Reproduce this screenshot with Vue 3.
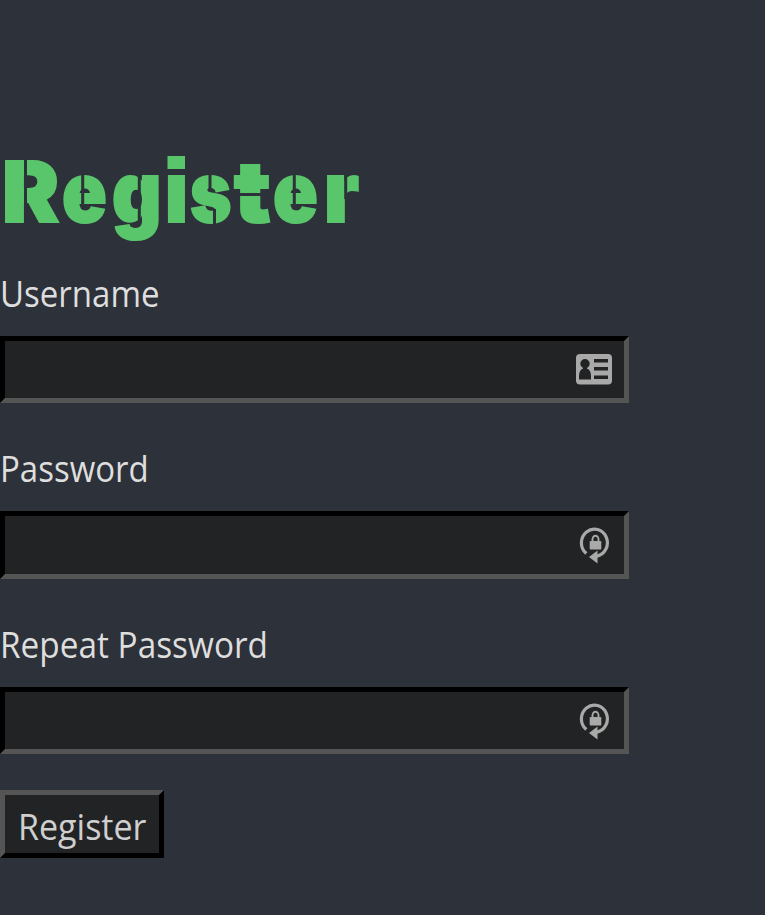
<script setup>
const title = [
  { ch: 'R', w: 60.5, sx: 1.02 },
  { ch: 'e', w: 49.5, sx: 0.88 },
  { ch: 'g', w: 53, sx: 0.91 },
  { ch: 'i', w: 25.500, sx: 0.92 },
  { ch: 's', w: 43.5, sx: 0.84 },
  { ch: 't', w: 39, sx: 1.09 },
  { ch: 'e', w: 51, sx: 0.88 },
  { ch: 'r', w: 38, sx: 0.96 },
]
const fields = [
  { id: 'username', label: 'Username', type: 'text', icon: 'card' },
  { id: 'password', label: 'Password', type: 'password', icon: 'lock' },
  { id: 'repeat', label: 'Repeat Password', type: 'password', icon: 'lock' },
]
</script>

<template>
  <main class="page">
    <h1 class="title">
      <span v-for="(l, i) in title" :key="i" class="letter" :style="{ width: l.w + 'px' }"><span class="glyph" :style="{ transform: `scaleX(${l.sx})` }">{{ l.ch }}</span></span>
      <svg class="cuts" viewBox="0 0 370 105" width="370" height="105" aria-hidden="true">
        <path d="M25.500 8V80M82.700 24V55M139.300 24V73M210 24V42M214.500 60V80M232 45.500H274M294.300 24V55M345.700 24V50" />
        <path class="dot-gap" d="M164 5h24v18h-24z" />
        <path class="dot" d="M167.500 7h17.500v13h-17.500z" />
      </svg>
    </h1>
    <form class="form" @submit.prevent>
      <div v-for="f in fields" :key="f.id" class="field" :class="f.id">
        <label :for="f.id"><span class="fit">{{ f.label }}</span></label>
        <div class="control">
          <input :id="f.id" :type="f.type" />
          <svg v-if="f.icon === 'card'" class="icon" viewBox="0 0 40 40" aria-hidden="true">
            <rect x="2" y="5" width="36" height="30.500" rx="4" fill="#a9a9a9" />
            <circle cx="11" cy="14.700" r="4.700" fill="#222325" />
            <path d="M5 30.500V27q0-6 4-7.500l2 1 2-1q4 1.500 4 7.500v3.500zM9 17h4v4H9zM20 10h14v3.500H20zM20 18h14v3.500H20zM20 26.500h14V30H20z" fill="#222325" />
          </svg>
          <svg v-else class="icon lock" viewBox="0 0 40 40" aria-hidden="true">
            <path d="M10.300 29.500A13 13.700 0 1 1 20.500 32.300" fill="none" stroke="#a9a9a9" stroke-width="3.200" />
            <path d="M13 33l8.500-6.500v13z" fill="#a9a9a9" />
            <rect x="13.700" y="17" width="11.600" height="8.500" rx=".8" fill="#a9a9a9" />
            <path d="M16.500 18v-2.500a3 3.800 0 0 1 6 0V18" fill="none" stroke="#a9a9a9" stroke-width="1.900" />
          </svg>
        </div>
      </div>
      <button type="submit"><span class="fit">Register</span></button>
    </form>
  </main>
</template>

<style>
body { background: #2d3139; }
</style>

<style scoped>
.page {
  box-sizing: border-box;
  height: 915px;
  padding-top: 149px;
  overflow: hidden;
  background: #2d3139;
  font-family: "Open Sans", "Noto Sans", sans-serif;
  font-size: 36px;
}
.title {
  position: relative;
  display: flex;
  height: 105px;
  margin: 0;
  padding-left: 1.500px;
  color: #5ac66c;
  font: 900 84px/86px Inter, sans-serif;
  -webkit-text-stroke: 2px #5ac66c;
}
.letter { display: block; flex: none; }
.glyph { display: inline-block; transform-origin: 0 0; }
.cuts { position: absolute; top: 0; left: 0; fill: none; stroke: #2d3139; stroke-width: 3; }
.cuts .dot-gap { fill: #2d3139; stroke: none; }
.cuts .dot { fill: #5ac66c; stroke: none; }
.field { height: 176px; }
.field.username { height: 175px; }
label { display: block; height: 82px; line-height: 80px; color: #dedede; white-space: nowrap; }
.fit { display: inline-block; transform-origin: 0 50%; transform: scaleX(.917); }
.repeat .fit { transform: scaleX(.927); }
.control { position: relative; width: 629px; height: 67px; }
.password .control { height: 68px; }
input {
  display: block;
  box-sizing: border-box;
  width: 100%;
  height: 100%;
  margin: 0;
  padding: 0 70px 0 12px;
  border: 5px solid;
  border-color: #000 #555 #555 #000;
  border-radius: 0;
  outline: none;
  background: #222325;
  color: #cfcfcf;
  font: inherit;
}
.icon { position: absolute; right: 15px; top: 13px; width: 40px; height: 40px; }
.icon.lock { right: 13px; top: 12.500px; }
button {
  display: block;
  box-sizing: border-box;
  width: 164px;
  height: 68px;
  margin: 9px 0 0;
  padding: 4px 0 0 13px;
  border: 5px solid;
  border-color: #555 #000 #000 #555;
  border-radius: 0;
  background: #222325;
  color: #cfcfcf;
  font: inherit;
  text-align: left;
}
button .fit { transform: scaleX(.945); }
</style>
